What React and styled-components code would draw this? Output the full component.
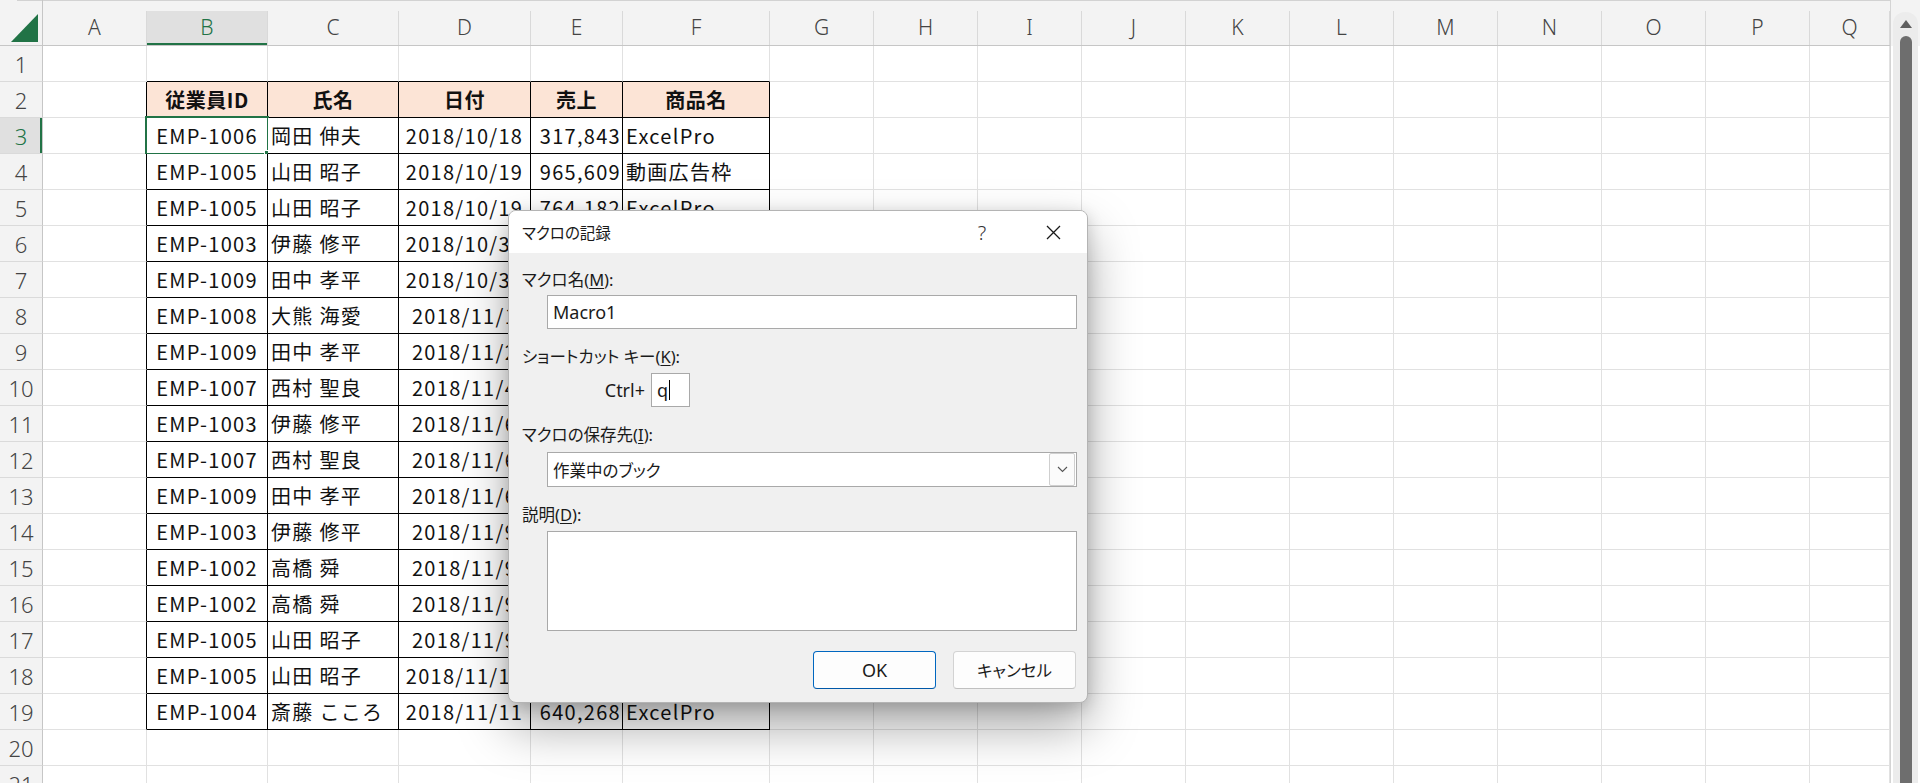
import React from 'react';
import styled, { createGlobalStyle } from 'styled-components';

const GlobalStyle = createGlobalStyle`
  html, body {
    margin: 0;
    padding: 0;
    background: #fff;
    overflow: hidden;
  }
`;

const GREEN = '#217346';
const GRID = '#e1e1e1';

const LETTERS = ['A', 'B', 'C', 'D', 'E', 'F', 'G', 'H', 'I', 'J', 'K', 'L', 'M', 'N', 'O', 'P', 'Q'];

const HEAD = ['従業員ID', '氏名', '日付', '売上', '商品名'];

const DATA = [
  ['EMP-1006', '岡田 伸夫', '2018/10/18', '317,843', 'ExcelPro'],
  ['EMP-1005', '山田 昭子', '2018/10/19', '965,609', '動画広告枠'],
  ['EMP-1005', '山田 昭子', '2018/10/19', '764,182', 'ExcelPro'],
  ['EMP-1003', '伊藤 修平', '2018/10/30', '512,330', 'ExcelPro'],
  ['EMP-1009', '田中 孝平', '2018/10/31', '238,905', '動画広告枠'],
  ['EMP-1008', '大熊 海愛', '2018/11/1', '871,442', 'ExcelPro'],
  ['EMP-1009', '田中 孝平', '2018/11/2', '402,118', '動画広告枠'],
  ['EMP-1007', '西村 聖良', '2018/11/4', '655,730', 'ExcelPro'],
  ['EMP-1003', '伊藤 修平', '2018/11/6', '129,864', 'ExcelPro'],
  ['EMP-1007', '西村 聖良', '2018/11/6', '948,201', '動画広告枠'],
  ['EMP-1009', '田中 孝平', '2018/11/6', '307,559', 'ExcelPro'],
  ['EMP-1003', '伊藤 修平', '2018/11/9', '583,016', 'ExcelPro'],
  ['EMP-1002', '高橋 舜', '2018/11/9', '214,677', '動画広告枠'],
  ['EMP-1002', '高橋 舜', '2018/11/9', '760,395', 'ExcelPro'],
  ['EMP-1005', '山田 昭子', '2018/11/9', '498,120', 'ExcelPro'],
  ['EMP-1005', '山田 昭子', '2018/11/10', '336,981', '動画広告枠'],
  ['EMP-1004', '斎藤 こころ', '2018/11/11', '640,268', 'ExcelPro'],
];

// column alignment for B..F
const ALIGN = ['center', 'left', 'center', 'right', 'left'];

const Screen = styled.div`
  position: relative;
  display: flex;
  width: 1920px;
  height: 783px;
  overflow: hidden;
  background: #fff;
  font-family: "Noto Sans CJK JP", sans-serif;
`;

const Sheet = styled.div`
  display: grid;
  grid-template-columns: 43px 104px 121px 131px 132px 92px 147px repeat(10, 104px) 80px;
  grid-template-rows: 46px;
  grid-auto-rows: 36px;
  align-content: start;
  width: 1890px;
  border-right: 1px solid #d4d4d4;
`;

const Corner = styled.div`
  display: flex;
  align-items: flex-end;
  justify-content: flex-end;
  padding: 0 4px 3px 0;
  background: #f3f3f3;
  border-right: 1px solid #c6c6c6;
  border-bottom: 1px solid #c6c6c6;
  background-image: linear-gradient(90deg, transparent 17px, #d2d2d2 17px);
  background-size: 100% 1px;
  background-repeat: no-repeat;
`;

const ColHead = styled.div`
  display: flex;
  align-items: flex-end;
  padding-top: 10px;
  background: #f3f3f3;
  border-top: 1px solid #d2d2d2;
  border-bottom: 1px solid #c6c6c6;
`;

const ColLabel = styled.div`
  flex: 1;
  align-self: stretch;
  display: flex;
  align-items: center;
  justify-content: center;
  padding-bottom: 2px;
  font-family: "Noto Sans", sans-serif;
  font-size: 21px;
  font-weight: 300;
  color: ${p => (p.$active ? GREEN : '#444')};
  background: ${p => (p.$active ? '#e0e0e0' : 'transparent')};
  border-right: 1px solid #d9d9d9;
  box-shadow: ${p => (p.$active ? `inset 0 -2px 0 ${GREEN}` : 'none')};
`;

const RowHead = styled.div`
  display: flex;
  align-items: center;
  justify-content: center;
  font-family: "Noto Sans", sans-serif;
  font-size: 22px;
  font-weight: 300;
  color: ${p => (p.$active ? GREEN : '#444')};
  background: ${p => (p.$active ? '#e0e0e0' : '#f3f3f3')};
  border-bottom: 1px solid #dadada;
  border-right: 1px solid #c6c6c6;
  box-shadow: ${p => (p.$active ? `inset -2px 0 0 ${GREEN}` : 'none')};
`;

const Cell = styled.div`
  position: relative;
  box-sizing: border-box;
  padding: ${p => (p.$align === 'right' ? '0 1px 0 3px' : '0 3px')};
  border-right: 1px solid ${p => (p.$darkRight ? '#000' : GRID)};
  border-bottom: 1px solid ${p => (p.$darkBottom ? '#000' : GRID)};
  background: ${p => (p.$head ? '#fce4d6' : '#fff')};
  font-size: 20px;
  font-weight: ${p => (p.$head ? 700 : 400)};
  line-height: 35px;
  letter-spacing: ${p => (p.$head ? '0.5px' : '1.3px')};
  text-align: ${p => p.$align};
  white-space: nowrap;
  color: #111;
`;

const SelectFrame = styled.div`
  position: absolute;
  top: -2px;
  left: -2px;
  right: -2px;
  bottom: -2px;
  border: 2px solid ${GREEN};
  pointer-events: none;
`;

const FillHandle = styled.div`
  position: absolute;
  right: -5px;
  bottom: -5px;
  width: 6px;
  height: 6px;
  background: ${GREEN};
  border: 1px solid #fff;
`;

const ScrollArea = styled.div`
  flex: 1;
  display: flex;
  justify-content: center;
  padding-top: 12px;
  background: linear-gradient(#f3f3f3 0 46px, #fff 46px);
`;

const ScrollTrack = styled.div`
  width: 25px;
  display: flex;
  flex-direction: column;
  align-items: center;
  padding-top: 8px;
  background: #ececec;
  border-radius: 12px 12px 0 0;
`;

const Thumb = styled.div`
  flex: 1;
  width: 12px;
  margin-top: 8px;
  background: #6e6e6e;
  border-radius: 6px 6px 0 0;
`;

const Dialog = styled.div`
  position: absolute;
  left: 508px;
  top: 210px;
  width: 580px;
  height: 493px;
  box-sizing: border-box;
  display: flex;
  flex-direction: column;
  background: #f0f0f0;
  border: 1px solid #b4b4b4;
  border-radius: 8px;
  overflow: hidden;
  box-shadow: 0 24px 50px rgba(0, 0, 0, 0.34), 0 4px 16px rgba(0, 0, 0, 0.16);
  font-family: "Noto Sans", "Noto Sans CJK JP", sans-serif;
  font-feature-settings: "palt";
  color: #1a1a1a;
`;

const TitleBar = styled.div`
  height: 42px;
  display: flex;
  align-items: center;
  padding-left: 13px;
  background: #fff;
`;

const Title = styled.div`
  flex: 1;
  font-size: 15.5px;
`;

const TitleButton = styled.div`
  width: 40px;
  display: flex;
  justify-content: center;
  align-items: center;
  font-size: 20px;
  font-weight: 300;
  color: #333;
  margin-right: ${p => p.$gap}px;
`;

const Body = styled.div`
  flex: 1;
  display: flex;
  flex-direction: column;
  padding: 0 10px 0 13px;
  font-size: 16.5px;
`;

const Label = styled.div`
  line-height: 22px;
  margin-top: ${p => p.$top}px;
`;

const U = styled.span`
  text-decoration: underline;
  text-underline-offset: 2px;
  text-decoration-thickness: 1px;
`;

const Latin = styled.span`
  font-size: 18px;
`;

const TextBox = styled.div`
  box-sizing: border-box;
  height: ${p => p.$h}px;
  margin: ${p => p.$top}px 0 0 25px;
  display: flex;
  align-items: center;
  padding-left: 5px;
  background: #fff;
  border: 1px solid #a9a9a9;
`;

const ShortcutRow = styled.div`
  display: flex;
  align-items: center;
  margin-top: 5px;
`;

const CtrlLabel = styled.div`
  width: 129px;
  box-sizing: border-box;
  padding-right: 6px;
  text-align: right;
  font-size: 18px;
`;

const KeyBox = styled.div`
  box-sizing: border-box;
  width: 39px;
  height: 34px;
  display: flex;
  align-items: center;
  padding-left: 5px;
  background: #fff;
  border: 1px solid #a9a9a9;
  font-size: 18px;
`;

const Caret = styled.span`
  width: 1px;
  height: 20px;
  margin-left: 1px;
  background: #000;
`;

const SelectText = styled.div`
  flex: 1;
`;

const DropButton = styled.div`
  width: 24px;
  height: 31px;
  margin-right: 1px;
  display: flex;
  align-items: center;
  justify-content: center;
  background: #fbfbfb;
  border: 1px solid #cfcfcf;
  border-radius: 2px;
`;

const ButtonRow = styled.div`
  display: flex;
  justify-content: flex-end;
  gap: 17px;
  margin-top: 20px;
  padding-right: 1px;
`;

const Button = styled.div`
  box-sizing: border-box;
  width: 123px;
  height: 38px;
  display: flex;
  align-items: center;
  justify-content: center;
  background: #fdfdfd;
  border: 1px solid ${p => (p.$primary ? '#0067c0' : '#d3d3d3')};
  border-bottom-color: ${p => (p.$primary ? '#0058a8' : '#c0c0c0')};
  border-radius: 4px;
`;

const inTable = (r, c) => r >= 2 && r <= 19 && c >= 1 && c <= 5;

function cellContent(r, c) {
  if (!inTable(r, c)) return null;
  if (r === 2) return HEAD[c - 1];
  return DATA[r - 3][c - 1];
}

function SheetGrid() {
  const rows = Array.from({ length: 21 }, (_, i) => i + 1);
  return (
    <Sheet>
      <Corner>
        <svg width="27" height="28" viewBox="0 0 27 28">
          <polygon points="27,0 27,28 0,28" fill={GREEN} />
        </svg>
      </Corner>
      {LETTERS.map(l => (
        <ColHead key={l}>
          <ColLabel $active={l === 'B'}>{l}</ColLabel>
        </ColHead>
      ))}
      {rows.map(r => (
        <React.Fragment key={r}>
          <RowHead $active={r === 3}>{r}</RowHead>
          {LETTERS.map((l, c) => {
            const table = inTable(r, c);
            return (
              <Cell
                key={l}
                $head={table && r === 2}
                $align={table ? (r === 2 ? 'center' : ALIGN[c - 1]) : 'left'}
                $darkRight={table || inTable(r, c + 1)}
                $darkBottom={table || inTable(r + 1, c)}
              >
                {cellContent(r, c)}
                {r === 3 && c === 1 && (
                  <SelectFrame>
                    <FillHandle />
                  </SelectFrame>
                )}
              </Cell>
            );
          })}
        </React.Fragment>
      ))}
    </Sheet>
  );
}

function MacroDialog() {
  return (
    <Dialog>
      <TitleBar>
        <Title>マクロの記録</Title>
        <TitleButton $gap={31}>?</TitleButton>
        <TitleButton $gap={14}>
          <svg width="15" height="15" viewBox="0 0 15 15">
            <path d="M1 1 L14 14 M14 1 L1 14" stroke="#1a1a1a" strokeWidth="1.3" fill="none" />
          </svg>
        </TitleButton>
      </TitleBar>
      <Body>
        <Label $top={16}>マクロ名(<U>M</U>):</Label>
        <TextBox $h={34} $top={4}>
          <Latin>Macro1</Latin>
        </TextBox>
        <Label $top={17}>ショートカット キー(<U>K</U>):</Label>
        <ShortcutRow>
          <CtrlLabel>Ctrl+</CtrlLabel>
          <KeyBox>
            q<Caret />
          </KeyBox>
        </ShortcutRow>
        <Label $top={17}>マクロの保存先(<U>I</U>):</Label>
        <TextBox $h={35} $top={6}>
          <SelectText>作業中のブック</SelectText>
          <DropButton>
            <svg width="11" height="7" viewBox="0 0 11 7">
              <path d="M1 1 L5.5 5.5 L10 1" stroke="#555" strokeWidth="1.1" fill="none" />
            </svg>
          </DropButton>
        </TextBox>
        <Label $top={17}>説明(<U>D</U>):</Label>
        <TextBox $h={100} $top={5} />
        <ButtonRow>
          <Button $primary>
            <Latin>OK</Latin>
          </Button>
          <Button>キャンセル</Button>
        </ButtonRow>
      </Body>
    </Dialog>
  );
}

export default function App() {
  return (
    <>
      <GlobalStyle />
      <Screen>
        <SheetGrid />
        <ScrollArea>
          <ScrollTrack>
            <svg width="12" height="8" viewBox="0 0 12 8">
              <polygon points="6,0 12,8 0,8" fill="#5f5f5f" />
            </svg>
            <Thumb />
          </ScrollTrack>
        </ScrollArea>
        <MacroDialog />
      </Screen>
    </>
  );
}
